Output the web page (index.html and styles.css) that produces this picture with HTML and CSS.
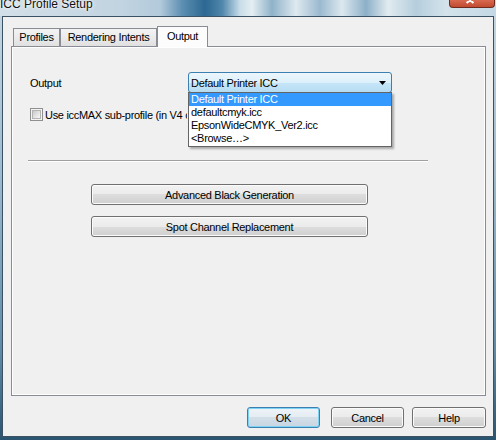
FILE: index.html
```html
<!DOCTYPE html>
<html>
<head>
<meta charset="utf-8">
<title>ICC Profile Setup</title>
<link rel="stylesheet" href="styles.css">
</head>
<body>
<div class="window">
  <div class="titlebar">
    <span class="title">ICC Profile Setup</span>
    <div class="close">
      <svg width="46" height="8" viewBox="0 0 46 8"><path d="M18 -3 L25 3 M25 -3 L18 3" stroke="#fff" stroke-width="2.2" fill="none"/></svg>
    </div>
  </div>
  <div class="frame">
    <div class="client">
      <div class="tabs">
        <div class="tab t1">Profiles</div>
        <div class="tab t2">Rendering Intents</div>
        <div class="tab t3 active">Output</div>
      </div>
      <div class="panel">
        <div class="row">
          <span class="lbl">Output</span>
          <div class="combo-wrap">
            <div class="combo">
              <span>Default Printer ICC</span>
              <svg class="arrow" width="7" height="4" viewBox="0 0 7 4"><path d="M0 0 H7 L3.5 4 Z" fill="#000"/></svg>
            </div>
            <ul class="droplist">
              <li class="sel">Default Printer ICC</li>
              <li>defaultcmyk.icc</li>
              <li>EpsonWideCMYK_Ver2.icc</li>
              <li>&lt;Browse…&gt;</li>
            </ul>
          </div>
        </div>
        <div class="check-row">
          <span class="checkbox"><span class="check-inner"></span></span>
          <span class="check-label">Use iccMAX sub-profile (in V4 container)</span>
        </div>
        <div class="sep"></div>
        <div class="panel-btns">
          <button class="btn wide">Advanced Black Generation</button>
          <button class="btn wide">Spot Channel Replacement</button>
        </div>
      </div>
      <div class="footer">
        <button class="btn ok">OK</button>
        <button class="btn cancel">Cancel</button>
        <button class="btn help">Help</button>
      </div>
    </div>
  </div>
</div>
</body>
</html>
```
FILE: styles.css
```css
* { box-sizing: border-box; }
html, body { margin: 0; padding: 0; }
body {
  width: 496px;
  height: 440px;
  overflow: hidden;
  font-family: "Liberation Sans", Arial, sans-serif;
  font-size: 11px;
  letter-spacing: -0.3px;
  color: #000;
  background: #3f6c89;
}
.window {
  width: 496px;
  height: 440px;
  display: flex;
  flex-direction: column;
  background: linear-gradient(180deg, #c6d7e3 0%, #9dbace 40%, #5e8aa6 80%, #2a5470 100%);
}
.titlebar {
  height: 16px;
  flex: none;
  display: flex;
  justify-content: space-between;
  align-items: flex-start;
  overflow: hidden;
  background: linear-gradient(90deg, #d3dfe8 0px, #c2d4e1 120px, #b3cadb 160px, #5d8fb2 182px, #2c6892 205px, #4f86ab 222px, #c9dde8 240px, #e4eef3 252px, #8fb2c9 272px, #dfe9ef 296px, #9ab9cf 320px, #dce8ee 342px, #8cb0c8 366px, #e1ebf0 388px, #b5cedd 416px, #d4e3eb 446px, #c3d8e5 496px);
}
.title {
  font-size: 12px;
  line-height: 12px;
  letter-spacing: 0;
  margin-top: -2px;
  color: #111;
  white-space: nowrap;
  text-shadow: 0 0 4px #fff, 0 0 2px #fff;
}
.close {
  width: 46px;
  height: 8px;
  margin-right: 1px;
  border: 1px solid #6e2a1d;
  border-top: none;
  border-radius: 0 0 4px 4px;
  background: linear-gradient(180deg, #d86a50 0%, #c14a30 100%);
  overflow: hidden;
  display: flex;
}
.close svg { display: block; margin-left: -1px; }
.frame {
  flex: 1;
  display: flex;
  padding: 0 2px 3px 2px;
}
.client {
  flex: 1;
  border: 1px solid #3a5264;
  background: #f0f0f0;
  padding: 9px 0 0 8px;
  display: flex;
  flex-direction: column;
}
.tabs {
  display: flex;
  align-items: flex-end;
  padding-left: 2px;
  height: 20px;
}
.tab {
  height: 18px;
  padding: 2px 0 0;
  border: 1px solid #898c95;
  border-bottom: none;
  background: linear-gradient(180deg, #f3f3f3 0%, #ebebeb 50%, #e0e0e0 100%);
  text-align: center;
  line-height: 13px;
  white-space: nowrap;
}
.t1 { width: 47px; }
.t2 { width: 97px; }
.t3 { width: 51px; }
.tab.active {
  height: 21px;
  padding-top: 3px;
  margin-bottom: -1px;
  background: #fcfcfc;
  position: relative;
  z-index: 1;
}
.panel {
  width: 475px;
  height: 350px;
  flex: none;
  border: 1px solid #898c95;
  box-shadow: inset 0 0 0 1px #ffffff;
  padding: 25px 0 0 16px;
}
.row {
  display: flex;
  align-items: center;
  height: 21px;
}
.lbl {
  width: 160px;
  padding-left: 2px;
}
.combo-wrap {
  position: relative;
  width: 204px;
}
.combo {
  height: 21px;
  border: 1px solid #3c7fb1;
  border-radius: 3px;
  background: linear-gradient(180deg, #edf6fc 0%, #dcf0fb 50%, #c6e6f8 50%, #b6dcf2 100%);
  display: flex;
  align-items: center;
  justify-content: space-between;
  padding: 0 5px 0 2px;
}
.arrow { display: block; }
.droplist {
  position: absolute;
  left: 0;
  top: 20px;
  width: 204px;
  margin: 0;
  padding: 0 0 1px 0;
  list-style: none;
  background: #fff;
  border: 1px solid #646464;
  box-shadow: 2px 2px 2px rgba(0, 0, 0, 0.3);
  z-index: 2;
}
.droplist li {
  height: 13px;
  line-height: 13px;
  padding-left: 2px;
  white-space: nowrap;
}
.droplist li.sel {
  background: #3399ff;
  color: #fff;
}
.check-row {
  display: flex;
  align-items: center;
  gap: 2px;
  height: 13px;
  margin-top: 15px;
  padding-left: 2px;
  white-space: nowrap;
}
.check-label {
  width: 142px;
  overflow: hidden;
  flex: none;
}
.checkbox {
  width: 13px;
  height: 13px;
  flex: none;
  border: 1px solid #8e8f8f;
  background: #f4f4f4;
  padding: 1px;
  display: flex;
}
.check-inner {
  flex: 1;
  border: 1px solid #b3b3b3;
  background: linear-gradient(135deg, #c9c9c9 0%, #e6e6e6 60%, #f6f6f6 100%);
}
.sep {
  margin-top: 39px;
  width: 400px;
  height: 2px;
  border-top: 1px solid #a0a0a0;
  border-bottom: 1px solid #ffffff;
}
.panel-btns {
  margin-top: 22px;
  margin-left: 63px;
  display: flex;
  flex-direction: column;
  gap: 11px;
}
.btn {
  font: inherit;
  letter-spacing: inherit;
  color: #000;
  height: 21px;
  padding: 0;
  margin: 0;
  border: 1px solid #707070;
  border-radius: 3px;
  background: linear-gradient(180deg, #f2f2f2 0%, #ebebeb 50%, #dddddd 50%, #cfcfcf 100%);
  box-shadow: inset 0 0 0 1px #fbfbfb;
  text-align: center;
  white-space: nowrap;
}
.btn.wide { width: 277px; }
.footer {
  display: flex;
  justify-content: flex-end;
  width: 475px;
  margin-top: 11px;
}
.ok {
  width: 73px;
  margin-right: 11px;
  border-color: #3c7fb1;
  background: linear-gradient(180deg, #eef3f7 0%, #e4ecf2 50%, #d3dfe8 50%, #c8d6e2 100%);
  box-shadow: inset 0 0 0 1px #7ed3f5;
}
.cancel { width: 73px; margin-right: 8px; }
.help { width: 74px; }
```
